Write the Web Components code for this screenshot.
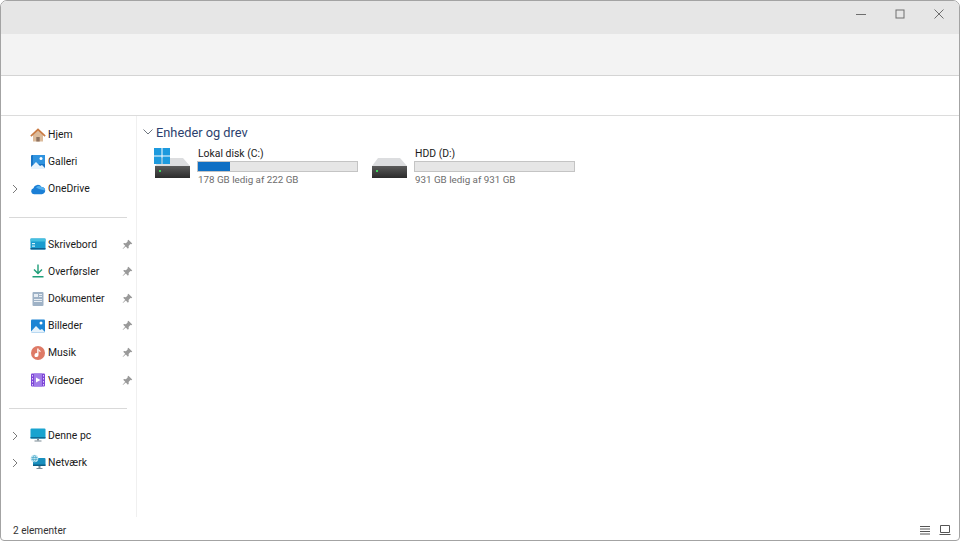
<!DOCTYPE html>
<html>
<head>
<meta charset="utf-8">
<title>Enheder og drev</title>
<style>
  html, body { margin: 0; height: 100%; background: #fff; }
  body { font-family: Roboto, "Open Sans", sans-serif; font-size: 10.4px; color: #1a1a1a; overflow: hidden; }
</style>
</head>
<body>
<fx-window>
  <fx-titlebar></fx-titlebar>
  <fx-nav slot="nav">
    <fx-nav-item icon="home">Hjem</fx-nav-item>
    <fx-nav-item icon="gallery">Galleri</fx-nav-item>
    <fx-nav-item icon="onedrive" expand>OneDrive</fx-nav-item>
    <fx-nav-sep></fx-nav-sep>
    <fx-nav-item icon="desktop" pin>Skrivebord</fx-nav-item>
    <fx-nav-item icon="download" pin>Overførsler</fx-nav-item>
    <fx-nav-item icon="docs" pin>Dokumenter</fx-nav-item>
    <fx-nav-item icon="pictures" pin>Billeder</fx-nav-item>
    <fx-nav-item icon="music" pin>Musik</fx-nav-item>
    <fx-nav-item icon="video" pin>Videoer</fx-nav-item>
    <fx-nav-sep></fx-nav-sep>
    <fx-nav-item icon="pc" expand>Denne pc</fx-nav-item>
    <fx-nav-item icon="network" expand>Netværk</fx-nav-item>
  </fx-nav>
  <fx-section slot="main" title="Enheder og drev">
    <fx-drive name="Lokal disk (C:)" free="178 GB ledig af 222 GB" used="20" system></fx-drive>
    <fx-drive name="HDD (D:)" free="931 GB ledig af 931 GB" used="0"></fx-drive>
  </fx-section>
  <fx-status slot="status">2 elementer</fx-status>
</fx-window>

<script>
const ICONS = {
  home: `<path d="M3 8v6.500h10V8L8 3.500z" fill="#dcbb9b"/><path d="M6.300 14.500v-4.500h3.400v4.500z" fill="#8f7360"/><path d="M.3 8.600 8 1.300l7.700 7.300-1.100 1.200L8 3.700 1.400 9.800z" fill="#c97a42"/>`,
  gallery: `<rect x="1" y="1" width="14" height="14" rx="1" fill="#1a74c4"/><rect x="3" y="1" width="12" height="9" fill="#2f93df"/><circle cx="11" cy="4.500" r="1.500" fill="#fff"/><path d="M1 13l5-5 4 4 2-1 3 3v1H1z" fill="#e6f2fb"/>`,
  onedrive: `<path d="M4 13.200a3 3 0 0 1-.6-5.900A4.500 4.500 0 0 1 11.600 6a3.600 3.600 0 0 1 3.600 3.600c0 2-1.400 3.600-3.400 3.600z" fill="#1b7fd6"/><path d="M6 6.500a4.300 4.300 0 0 1 5.600-.5 3.600 3.600 0 0 1 3.400 3.500L9 8z" fill="#53b0ee"/>`,
  desktop: `<rect x="0.500" y="2.500" width="15" height="11" rx="1" fill="#1a9ccf"/><rect x="0.500" y="2.500" width="15" height="3" fill="#45bfe0"/><rect x="2" y="7" width="3" height="1.200" fill="#d8f2fa"/><rect x="2" y="9.500" width="3" height="1.200" fill="#d8f2fa"/><rect x="0.500" y="12" width="15" height="1.500" fill="#0f5f8f"/>`,
  download: `<path d="M8 1.500v8.500M4 6.500 8 10.500 12 6.500" fill="none" stroke="#1f9e78" stroke-width="1.400"/><rect x="2.500" y="13" width="11" height="1.500" fill="#1f9e78"/>`,
  docs: `<rect x="2.500" y="1" width="11" height="14" rx="1" fill="#9fb2c6"/><rect x="4" y="3" width="4" height="3" fill="#e7edf3"/><rect x="9" y="3" width="3" height="1" fill="#e7edf3"/><rect x="9" y="5" width="3" height="1" fill="#e7edf3"/><rect x="4" y="8" width="8" height="1" fill="#e7edf3"/><rect x="4" y="10" width="8" height="1" fill="#e7edf3"/>`,
  pictures: `<rect x="1" y="1.500" width="14" height="13" rx="1" fill="#1c84d4"/><circle cx="11" cy="5" r="1.500" fill="#fff"/><path d="M1 13.500 6 8l4 4 2-1 3 3v.500H1z" fill="#e6f2fb"/>`,
  music: `<circle cx="8" cy="8" r="7" fill="#de7a66"/><path d="M8.500 3.500v6.500a2 2 0 1 1-1.300-1.800V3.500z" fill="#fff"/><path d="M8.500 3.500c.3 1.500 1.500 1.800 2 2.500v1.200c-.8-.8-1.500-1-2-1.500z" fill="#fff"/>`,
  video: `<rect x="1" y="1.500" width="14" height="13" rx="1" fill="#7d45d8"/><rect x="4" y="1.500" width="8" height="13" fill="#a07be8"/><path d="M6 5.500v5l4.500-2.500z" fill="#fff"/><path d="M2 3h1v1.500H2zm0 3h1v1.500H2zm0 3h1v1.500H2zm0 3h1v1.500H2zm11-9h1v1.500h-1zm0 3h1v1.500h-1zm0 3h1v1.500h-1zm0 3h1v1.500h-1z" fill="#ddd0f7"/>`,
  pc: `<rect x="0.500" y="1.500" width="15" height="10" rx="1" fill="#19a3cf"/><rect x="0.500" y="10" width="15" height="1.500" fill="#0f6b95"/><rect x="7" y="11.500" width="2" height="2" fill="#7b8a94"/><rect x="4.500" y="13.500" width="7" height="1" fill="#7b8a94"/>`,
  network: `<rect x="3" y="4" width="12.500" height="8" rx="1" fill="#198fbe"/><rect x="3" y="10.500" width="12.500" height="1.500" fill="#0e5f85"/><rect x="8.500" y="12" width="2" height="2" fill="#7b8a94"/><rect x="6.500" y="14" width="6" height="1" fill="#7b8a94"/><circle cx="4.500" cy="4.500" r="3.800" fill="#bfe6f2"/><path d="M1.500 3.500h6M1.500 5.500h6M4.500 1c-2 2-2 5 0 7M4.500 1c2 2 2 5 0 7" fill="none" stroke="#3b9cc0" stroke-width=".6"/>`
};

// little helper so each class stays short
function shadow(el, html) {
  const root = el.attachShadow({ mode: 'open' });
  root.innerHTML = html;
  return root;
}

class FxWindow extends HTMLElement {
  connectedCallback() {
    if (this.shadowRoot) return;
    shadow(this, `
      <style>
        :host { display: flex; flex-direction: column; box-sizing: border-box; width: 960px; height: 541px;
                border: 1px solid #a3a3a3; border-radius: 7px 7px 4px 4px; overflow: hidden; background: #fff; }
        .toolbar { height: 41px; flex: none; background: #f3f3f3; border-bottom: 1px solid #d4d4d4; }
        .address { height: 39px; flex: none; background: #fff; border-bottom: 1px solid #dcdcdc; }
        .body { flex: 1; display: flex; min-height: 0; }
        .main { flex: 1; min-width: 0; }
      </style>
      <slot></slot>
      <div class="toolbar"></div>
      <div class="address"></div>
      <div class="body">
        <slot name="nav"></slot>
        <div class="main"><slot name="main"></slot></div>
      </div>
      <slot name="status"></slot>`);
  }
}

class FxTitlebar extends HTMLElement {
  connectedCallback() {
    if (this.shadowRoot) return;
    shadow(this, `
      <style>
        :host { display: flex; justify-content: flex-end; flex: none; height: 33px; background: #e6e6e6; }
        .btn { width: 39px; display: flex; align-items: center; justify-content: center; padding-bottom: 7px; }
        .close { margin-right: 1px; }
        svg { display: block; width: 10px; height: 10px; fill: none; stroke: #6e6e6e; stroke-width: 1; }
      </style>
      <div class="btn"><svg viewBox="0 0 10 10"><path d="M0 5.500h10"/></svg></div>
      <div class="btn"><svg viewBox="0 0 10 10"><rect x="1" y="1" width="8" height="8"/></svg></div>
      <div class="btn close"><svg viewBox="0 0 10 10"><path d="M.5.5l9 9M9.500.5l-9 9"/></svg></div>`);
  }
}

class FxNav extends HTMLElement {
  connectedCallback() {
    if (this.shadowRoot) return;
    shadow(this, `
      <style>
        :host { display: flex; flex-direction: column; flex: none; box-sizing: border-box; width: 136px;
                padding-top: 5px; border-right: 1px solid #f0f0f0; height: 401px; }
      </style>
      <slot></slot>`);
  }
}

class FxNavItem extends HTMLElement {
  connectedCallback() {
    if (this.shadowRoot) return;
    const chevron = this.hasAttribute('expand')
      ? `<svg class="chev" viewBox="0 0 6 10"><path d="M1 1l4 4-4 4"/></svg>` : '';
    const pin = this.hasAttribute('pin')
      ? `<svg class="pin" viewBox="0 0 12 12"><path d="M7 .8 11.200 5l-1 .7-1-.2-2 2 .2 2-1 1-2.200-2.300L1 11l-.3-.3 2.800-3.300L1.300 5.300l1-1 2 .2 2-2-.2-1z"/></svg>` : '';
    shadow(this, `
      <style>
        :host { display: flex; align-items: center; flex: none; height: 27.200px; padding-left: 29px; position: relative; }
        .icon { width: 16px; height: 16px; flex: none; margin-right: 2px; }
        .chev { position: absolute; left: 11px; top: 9px; width: 6px; height: 10px; fill: none; stroke: #7a7a7a; stroke-width: 1; }
        .pin { position: absolute; left: 120.500px; top: 8px; width: 11px; height: 11px; fill: #9a9a9a; }
        .label { white-space: nowrap; }
      </style>
      ${chevron}
      <svg class="icon" viewBox="0 0 16 16">${ICONS[this.getAttribute('icon')] || ''}</svg>
      <span class="label"><slot></slot></span>
      ${pin}`);
  }
}

class FxNavSep extends HTMLElement {
  connectedCallback() {
    if (this.shadowRoot) return;
    shadow(this, `
      <style>
        :host { display: block; flex: none; height: 1px; margin: 14px 9px 13px 8px; background: #d9d9d9; }
      </style>`);
  }
}

class FxSection extends HTMLElement {
  connectedCallback() {
    if (this.shadowRoot) return;
    shadow(this, `
      <style>
        :host { display: block; padding: 7px 0 0 6px; }
        .head { display: flex; align-items: center; height: 18px; color: #2c3f6e; font-size: 12.800px; }
        svg { width: 10px; height: 6px; margin-right: 3px; fill: none; stroke: #6f7680; stroke-width: 1; }
        .items { display: flex; gap: 12px; margin-top: 7px; margin-left: 11px; }
      </style>
      <div class="head"><svg viewBox="0 0 10 6"><path d="M.5.5 5 5 9.500.5"/></svg>${this.getAttribute('title')}</div>
      <div class="items"><slot></slot></div>`);
  }
}

class FxDrive extends HTMLElement {
  connectedCallback() {
    if (this.shadowRoot) return;
    const logo = this.hasAttribute('system') ? `
      <path d="M0 0h7.500v7.500H0zM8.500 0H16v7.500H8.500zM0 8.500h7.500V16H0zM8.500 8.500H16V16H8.500z" fill="#1d9ade"/>` : '';
    shadow(this, `
      <style>
        :host { display: flex; width: 205px; height: 40px; }
        .icon { width: 37px; height: 32px; flex: none; margin-right: 6px; }
        .info { flex: 1; min-width: 0; }
        .name { line-height: 11px; height: 13px; padding-left: 1px; white-space: nowrap; }
        .bar { box-sizing: border-box; height: 11px; width: 161px; border: 1px solid #c4c4c4; background: #e6e6e6; }
        .fill { height: 100%; width: ${this.getAttribute('used')}%; background: #0e6fc4; }
        .free { margin-top: 1px; padding-left: 1px; font-size: 9.800px; line-height: 14px; color: #6d6d6d; white-space: nowrap; }
      </style>
      <svg class="icon" viewBox="0 0 37 32">
        <defs><linearGradient id="b" x1="0" y1="0" x2="0" y2="1"><stop offset="0" stop-color="#5a5a5a"/><stop offset="1" stop-color="#2b2b2b"/></linearGradient></defs>
        <path d="M7 10H29L36 18H1z" fill="#dcdddf"/>
        <rect x="1" y="18" width="35" height="12" fill="url(#b)"/>
        <rect x="5" y="22" width="2" height="2" fill="#3fd35a"/>
        ${logo}
      </svg>
      <div class="info">
        <div class="name">${this.getAttribute('name')}</div>
        <div class="bar"><div class="fill"></div></div>
        <div class="free">${this.getAttribute('free')}</div>
      </div>`);
  }
}

class FxStatus extends HTMLElement {
  connectedCallback() {
    if (this.shadowRoot) return;
    shadow(this, `
      <style>
        :host { display: flex; align-items: center; flex: none; box-sizing: border-box; height: 24px; padding: 4px 8px 0 12px; font-size: 10.100px; color: #333; }
        .txt { flex: 1; }
        svg { width: 12px; height: 12px; fill: none; stroke: #555; stroke-width: 1; margin-left: 8px; }
      </style>
      <span class="txt"><slot></slot></span>
      <svg viewBox="0 0 12 12"><path d="M1 2.500h10M1 5h10M1 7.500h10M1 10h10"/></svg>
      <svg viewBox="0 0 12 12"><path d="M1.500 1.500h9v7h-9zM.5 10.500h11"/></svg>`);
  }
}

customElements.define('fx-window', FxWindow);
customElements.define('fx-titlebar', FxTitlebar);
customElements.define('fx-nav', FxNav);
customElements.define('fx-nav-item', FxNavItem);
customElements.define('fx-nav-sep', FxNavSep);
customElements.define('fx-section', FxSection);
customElements.define('fx-drive', FxDrive);
customElements.define('fx-status', FxStatus);
</script>
</body>
</html>
